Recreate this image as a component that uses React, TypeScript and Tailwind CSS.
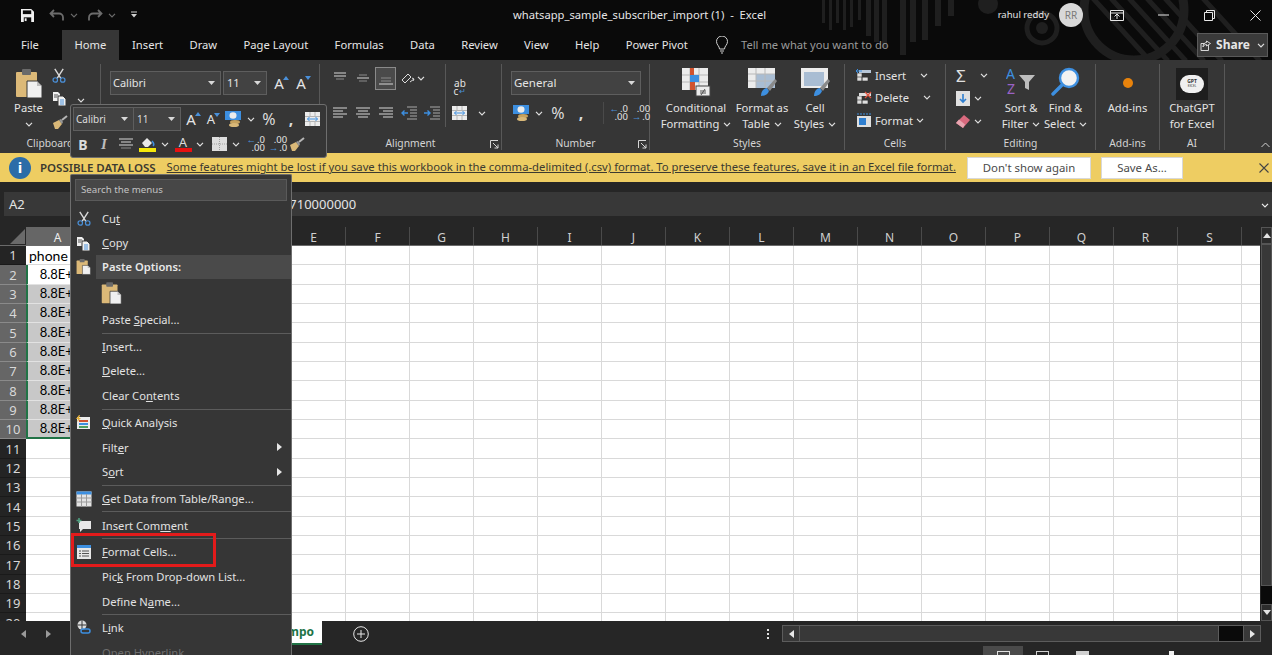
import type { ReactNode } from "react";

const Chev = ({ c = "#e0e0e0", className = "" }: { c?: string; className?: string }) => (
  <svg width="8" height="5" viewBox="0 0 8 5" className={`shrink-0 ${className}`}>
    <path d="M1 .8l3 3 3-3" stroke={c} strokeWidth="1.2" fill="none" />
  </svg>
);

const Caret = () => (
  <svg width="7" height="4" viewBox="0 0 7 4" className="shrink-0">
    <path d="M0 0h7L3.500 4z" fill="#d8d8d8" />
  </svg>
);

const Scissors = () => (
  <svg width="14" height="15" viewBox="0 0 15 16">
    <path d="M3 1l6.500 10M12 1L5.500 11" stroke="#d9d9d9" strokeWidth="1.500" fill="none" />
    <circle cx="3.500" cy="12.800" r="2.400" stroke="#4a90d9" strokeWidth="1.300" fill="none" />
    <circle cx="11.500" cy="12.800" r="2.400" stroke="#4a90d9" strokeWidth="1.300" fill="none" />
  </svg>
);

const CopyIcon = () => (
  <svg width="15" height="15" viewBox="0 0 15 15">
    <path d="M1 1h5l2 2v7H1z" fill="#f0f0f0" />
    <path d="M6 5h5l3 3v7H6z" fill="#f0f0f0" stroke="#363636" />
    <path d="M8 9h4M8 11h4M8 13h4" stroke="#4a90d9" />
    <path d="M2 4h4M2 6h3" stroke="#555" />
  </svg>
);

const Brush = () => (
  <svg width="16" height="14" viewBox="0 0 16 14">
    <path d="M1 8l6-3 3 4-4 5H3z" fill="#d9b878" />
    <path d="M7 5l2-1 2 3-1 2z" fill="#9a9a9a" />
    <path d="M10 5l5-4" stroke="#b5b5b5" strokeWidth="2" />
  </svg>
);

const PasteIcon = ({ w = 28, h = 30 }: { w?: number; h?: number }) => (
  <svg width={w} height={h} viewBox="0 0 28 30">
    <rect x="1" y="3" width="21" height="25" rx="1" fill="#dcb978" />
    <rect x="7" y="0" width="9" height="6" rx="1" fill="#6a6a6a" />
    <path d="M12 12h10l5 5v12H12z" fill="#f0f0f0" stroke="#363636" />
    <path d="M22 12v5h5" fill="#bdbdbd" />
  </svg>
);

const Lines = ({ rows, c = "#d6d6d6" }: { rows: number[][]; c?: string }) => (
  <svg width="16" height="14" viewBox="0 0 16 14">
    {rows.map((r, i) => (
      <path key={i} d={`M${r[0]} ${r[2]}H${r[1]}`} stroke={r[3] ? "#8a8a8a" : c} strokeWidth="1" />
    ))}
  </svg>
);

const GrowA = ({ up, size = 15 }: { up: boolean; size?: number }) => (
  <span className="relative flex items-end leading-none text-[#e4e4e4]" style={{ fontSize: size }}>
    A
    <svg width="6" height="4" viewBox="0 0 6 4" className="absolute -right-[5px] top-0">
      <path d={up ? "M0 4L3 0l3 4z" : "M0 0h6L3 4z"} fill="#4a90d9" />
    </svg>
  </span>
);

const Currency = () => (
  <svg width="16" height="19" viewBox="0 0 16 19">
    <rect x="0" y="1" width="16" height="9" fill="#3d8fe0" />
    <ellipse cx="8" cy="5.500" rx="3.500" ry="3.200" fill="#ececec" />
    <ellipse cx="10" cy="12" rx="5" ry="2" fill="#c6a25f" />
    <ellipse cx="9" cy="15" rx="5" ry="2" fill="#d9b878" />
  </svg>
);

const WrapIcon = ({ w = 15, h = 14 }: { w?: number; h?: number }) => (
  <svg width={w} height={h} viewBox="0 0 15 14">
    <rect width="15" height="14" fill="#ececec" />
    <path d="M0 4.500h15M0 9.500h15M5 0v4M10 0v4M5 10v4M10 10v4" stroke="#b4b4b4" />
    <path d="M2.500 7h10M4.500 5l-2 2 2 2M10.500 5l2 2-2 2" stroke="#3d8fe0" fill="none" />
  </svg>
);

const DecArrows = ({ more }: { more: boolean }) => (
  <span className="flex w-[20px] flex-col text-[9.500px] leading-[8px] text-[#e4e4e4]">
    <span className="flex items-center justify-end gap-[1px] whitespace-nowrap">
      {more ? <span>.00</span> : <><span className="text-[#4a90d9]">←</span><span>.0</span></>}
    </span>
    <span className="flex items-center justify-end gap-[1px] whitespace-nowrap">
      {more ? <><span className="text-[#4a90d9]">→</span><span>.0</span></> : <span>.00</span>}
    </span>
  </span>
);

const Launcher = () => (
  <svg width="9" height="9" viewBox="0 0 9 9" className="absolute right-[2px] bottom-[1px]">
    <path d="M.5 8V.5H8M3 3l5 5M8 4.500V8H4.500" stroke="#d6d6d6" fill="none" />
  </svg>
);

function Group({ className, label, launcher, children }: { className: string; label: string; launcher?: boolean; children: ReactNode }) {
  return (
    <div className={`relative flex h-[86px] shrink-0 flex-col border-r border-[#585858] ${className}`}>
      <div className="flex h-[72px] min-h-0">{children}</div>
      <div className="flex h-[14px] items-center justify-center pt-[1px] text-[10.300px] leading-none text-[#d4d4d4]">{label}</div>
      {launcher && <Launcher />}
    </div>
  );
}

function LargeBtn({ className, icon, l1, l2, chev = true }: { className: string; icon: ReactNode; l1: string; l2?: string; chev?: boolean }) {
  return (
    <div className={`flex flex-col items-center ${className}`}>
      <div className="flex h-[36px] items-center justify-center">{icon}</div>
      <div className="flex h-[16px] items-center whitespace-nowrap text-[11.200px] leading-none">{l1}</div>
      {l2 && (
        <div className="flex h-[16px] items-center gap-[4px] whitespace-nowrap text-[11.200px] leading-none">
          {l2}
          {chev && <Chev />}
        </div>
      )}
    </div>
  );
}

const Slot = ({ children, className = "w-[23px]" }: { children: ReactNode; className?: string }) => (
  <div className={`flex h-full shrink-0 items-center justify-center ${className}`}>{children}</div>
);

const CondIcon = () => (
  <svg width="30" height="30" viewBox="0 0 30 30">
    <rect x="1" y="1" width="26" height="22" fill="#ececec" />
    <path d="M1 8h26M1 15h26M9 1v22M18 1v22" stroke="#b8b8b8" />
    <rect x="9" y="1" width="4" height="7" fill="#d0532f" />
    <rect x="9" y="8" width="9" height="7" fill="#3d8fe0" />
    <rect x="9" y="15" width="5" height="8" fill="#d0532f" />
    <rect x="15" y="19" width="14" height="10" fill="#ececec" stroke="#444" />
    <path d="M19 24h6M19 26h6M20 28l4-6" stroke="#555" />
  </svg>
);

const TableIcon = ({ plain }: { plain?: boolean }) => (
  <svg width="30" height="30" viewBox="0 0 30 30">
    <rect x="1" y="1" width="27" height="20" fill="#ececec" />
    <rect x={plain ? 4 : 9} y={plain ? 5 : 7} width={plain ? 20 : 19} height={14} fill="#a9bdd3" />
    {!plain && <path d="M1 7h27M1 14h27M9 1v20M18 1v20" stroke="#b8b8b8" />}
    <path d="M14 29c0-5 3-8 6-8l2 3c-1 3-4 5-8 5z" fill="#3d8fe0" />
    <path d="M20 21l8-9 2 2-7 10z" fill="#8a8a8a" />
  </svg>
);

const SortIcon = () => (
  <svg width="30" height="30" viewBox="0 0 30 30">
    <text x="0" y="12" fontSize="14" fill="#3d8fe0" fontFamily="Noto Sans, sans-serif">A</text>
    <text x="1" y="27" fontSize="14" fill="#9a62c4" fontFamily="Noto Sans, sans-serif">Z</text>
    <path d="M13 8h16l-6 7v8l-4-2v-6z" fill="#bdbdbd" />
  </svg>
);

const FindIcon = () => (
  <svg width="30" height="30" viewBox="0 0 30 30">
    <circle cx="18" cy="11" r="9" fill="#f2f2f2" stroke="#3d8fe0" strokeWidth="2.400" />
    <path d="M11 18L2 27" stroke="#3d8fe0" strokeWidth="3.400" strokeLinecap="round" />
  </svg>
);

const CellsRow = ({ icon, label, chevClass }: { icon: ReactNode; label: string; chevClass: string }) => (
  <div className="flex h-[22.500px] items-center whitespace-nowrap text-[11.200px] leading-none">
    <span className="flex w-[16px] shrink-0 justify-center">{icon}</span>
    <span className="ml-[3px]">{label}</span>
    <Chev className={chevClass} />
  </div>
);

const CellGrid = ({ x }: { x?: boolean }) => (
  <svg width="16" height="14" viewBox="0 0 16 14">
    <path d="M1 5h5v8H1zM6 9h6v4H6zM1 9h11" fill="#dfdfdf" stroke="#333" strokeWidth=".6" />
    <rect x="3" y="2" width="12" height="3" fill={x ? "#dfdfdf" : "#b8c7d8"} />
    {x ? <path d="M9 1l6 6M15 1L9 7" stroke="#e0533f" strokeWidth="1.300" /> : <path d="M0 3h6M2 1L0 3l2 2" stroke="#3d8fe0" fill="none" />}
  </svg>
);

const FormatIcon = () => (
  <svg width="16" height="15" viewBox="0 0 16 15">
    <rect x="1" y="3" width="14" height="11" fill="#dfdfdf" />
    <rect x="3" y="5" width="7" height="7" fill="#2f7fd0" />
    <path d="M1 1h14" stroke="#3d8fe0" strokeDasharray="2 1" />
  </svg>
);

const CtxIcon = ({ children }: { children: ReactNode }) => (
  <span className="flex w-[25px] shrink-0 justify-center">{children}</span>
);

function MenuItem({ label, icon, u, arrow, disabled }: { label: string; icon?: ReactNode; u?: number; arrow?: boolean; disabled?: boolean }) {
  return (
    <div className={`flex h-[24.700px] shrink-0 items-center whitespace-nowrap text-[11.200px] leading-none ${disabled ? "text-[#6e6e6e]" : "text-[#e2e2e2]"}`}>
      <CtxIcon>{icon}</CtxIcon>
      <span className="ml-[6px]">
        {u === undefined ? label : <>{label.slice(0, u)}<span className="underline">{label[u]}</span>{label.slice(u + 1)}</>}
      </span>
      {arrow && (
        <svg width="5" height="8" viewBox="0 0 5 8" className="ml-auto mr-[9px]">
          <path d="M0 0l5 4-5 4z" fill="#e6e6e6" />
        </svg>
      )}
    </div>
  );
}

const MenuSep = () => (
  <div className="flex h-[2px] shrink-0 items-center pl-[31px]">
    <div className="h-px w-full bg-[#5c5c5c]" />
  </div>
);

function ContextMenu() {
  return (
    <div className="absolute left-[70px] top-[174px] z-20 flex h-[481px] w-[222px] flex-col overflow-hidden rounded-t-[2px] border border-b-0 border-[#6e6e6e] bg-[#363636]">
      <div className="mx-[4px] mt-[4px] mb-[5px] flex h-[22px] shrink-0 items-center border border-[#5a5a5a] bg-[#474747] px-[5px] text-[9.700px] text-[#c4c4c4]">
        Search the menus
      </div>
      <MenuItem label="Cut" u={2} icon={<Scissors />} />
      <MenuItem label="Copy" u={0} icon={<CopyIcon />} />
      <div className="flex h-[24px] shrink-0 items-center">
        <CtxIcon><PasteIcon w={15} h={16} /></CtxIcon>
        <div className="flex h-full flex-1 items-center bg-[#4a4a4a] pl-[6px] text-[11.200px] font-semibold text-[#e8e8e8]">Paste Options:</div>
      </div>
      <div className="flex h-[28px] shrink-0 items-center pl-[30px]"><PasteIcon w={21} h={23} /></div>
      <MenuItem label="Paste Special..." u={6} />
      <MenuSep />
      <MenuItem label="Insert..." u={0} />
      <MenuItem label="Delete..." u={0} />
      <MenuItem label="Clear Contents" u={8} />
      <MenuSep />
      <MenuItem
        label="Quick Analysis"
        u={0}
        icon={
          <svg width="15" height="15" viewBox="0 0 15 15">
            <rect x="1" y="2" width="13" height="12" fill="#ececec" />
            <path d="M3 6h9" stroke="#d0532f" strokeWidth="2" />
            <path d="M3 9h9" stroke="#3d8fe0" strokeWidth="2" />
            <path d="M3 12h9" stroke="#4e9e5f" strokeWidth="2" />
            <path d="M3 0L0 4h2L1 7l4-4H3l1-3z" fill="#e8b23a" />
          </svg>
        }
      />
      <MenuItem label="Filter" u={4} arrow />
      <MenuItem label="Sort" u={1} arrow />
      <MenuSep />
      <MenuItem
        label="Get Data from Table/Range..."
        u={0}
        icon={
          <svg width="16" height="16" viewBox="0 0 16 16">
            <rect x=".5" y=".5" width="15" height="15" fill="#e4e4e4" />
            <rect x=".5" y=".5" width="15" height="3" fill="#3d8fe0" />
            <path d="M0 7h16M0 11h16M5.500 3v13M10.500 3v13" stroke="#9a9a9a" />
          </svg>
        }
      />
      <MenuSep />
      <MenuItem
        label="Insert Comment"
        u={10}
        icon={
          <svg width="16" height="14" viewBox="0 0 16 14">
            <path d="M3 3h12v8H7l-3 3v-3H3z" fill="#e8e8e8" />
            <path d="M3 0v5M.5 2.500h5" stroke="#4e9e7f" strokeWidth="1.600" />
          </svg>
        }
      />
      <MenuSep />
      <MenuItem
        label="Format Cells..."
        u={0}
        icon={
          <svg width="14" height="14" viewBox="0 0 14 14">
            <rect width="14" height="14" fill="#e8e8e8" />
            <rect width="14" height="3" fill="#3d8fe0" />
            <path d="M2 6h2M5 6h7M2 8.500h2M5 8.500h7M2 11h2M5 11h7" stroke="#555" />
          </svg>
        }
      />
      <MenuItem label="Pick From Drop-down List..." u={3} />
      <MenuItem label="Define Name..." u={8} />
      <MenuSep />
      <MenuItem
        label="Link"
        u={1}
        icon={
          <svg width="15" height="15" viewBox="0 0 15 15">
            <circle cx="6" cy="5" r="4.500" fill="#dcdcdc" />
            <path d="M1.500 5h9M6 .5v9" stroke="#363636" />
            <path d="M5 11a2 2 0 012-2h2M10 13H7a2 2 0 01-2-2M9 9h3a2 2 0 010 4h-2" stroke="#3d8fe0" strokeWidth="1.500" fill="none" />
          </svg>
        }
      />
      <MenuItem label="Open Hyperlink" u={6} disabled />
      {/* red annotation around Format Cells */}
      <div className="absolute left-[0px] top-[358px] h-[34px] w-[145px] border-[3px] border-[#e31b1b]" />
    </div>
  );
}

function MiniToolbar() {
  return (
    <div className="absolute left-[70px] top-[104px] z-10 flex h-[54px] w-[257px] flex-col rounded-[3px] border border-[#6e6e6e] bg-[#363636] pl-[2px] text-[#dcdcdc]">
      <div className="mt-[2px] flex h-[24px] items-center">
        <div className="flex h-[24px] w-[61px] items-center justify-between border border-[#5e5e5e] bg-[#424242] pl-[2px] pr-[5px] text-[10px]">Calibri<Caret /></div>
        <div className="flex h-[24px] w-[47px] items-center justify-between border border-l-0 border-[#5e5e5e] bg-[#424242] pl-[3px] pr-[5px] text-[10px]">11<Caret /></div>
        <Slot className="w-[20px]"><GrowA up /></Slot>
        <Slot className="w-[20px]"><GrowA up={false} size={13} /></Slot>
        <Slot className="w-[24px]"><Currency /></Slot>
        <Slot className="w-[12px]"><Chev /></Slot>
        <Slot className="w-[24px]"><span className="text-[16px]">%</span></Slot>
        <Slot className="w-[20px]"><span className="text-[16px] font-bold">,</span></Slot>
        <Slot className="w-[22px]"><WrapIcon /></Slot>
      </div>
      <div className="flex h-[26px] items-center">
        <Slot className="w-[20px]"><span className="text-[14px] font-bold">B</span></Slot>
        <Slot className="w-[22px]"><span className="font-['Liberation_Serif',serif] text-[15px] font-bold italic text-[#bdbdbd]">I</span></Slot>
        <Slot className="w-[22px]"><Lines rows={[[1, 15, 2], [3, 13, 5], [1, 15, 8], [3, 13, 11, 1]]} /></Slot>
        <Slot className="w-[20px]">
          <svg width="17" height="16" viewBox="0 0 17 16">
            <path d="M3 7l5-5 5 5-4 4H6z" fill="#e8e8e8" />
            <path d="M13 5c2 2 2 4 1 5" stroke="#3d8fe0" strokeWidth="1.500" fill="none" />
            <rect y="12" width="17" height="4" fill="#f5e80a" />
          </svg>
        </Slot>
        <Slot className="w-[16px]"><Chev /></Slot>
        <Slot className="w-[20px]">
          <span className="relative flex h-[16px] w-[17px] justify-center text-[13px] leading-[13px]">A<span className="absolute bottom-0 h-[4px] w-[17px] bg-[#e81010]" /></span>
        </Slot>
        <Slot className="w-[14px]"><Chev /></Slot>
        <Slot className="w-[24px]">
          <svg width="15" height="14" viewBox="0 0 15 14">
            <rect width="15" height="14" fill="#dedede" />
            <path d="M7.500 0v14M0 7h15" stroke="#a0a0a0" strokeDasharray="1 1" />
          </svg>
        </Slot>
        <Slot className="w-[10px]"><Chev /></Slot>
        <Slot className="w-[28px]"><DecArrows more={false} /></Slot>
        <Slot className="w-[18px]"><DecArrows more /></Slot>
        <Slot className="w-[20px]"><Brush /></Slot>
      </div>
    </div>
  );
}

function TitleArea() {
  const tabs = ["Insert", "Draw", "Page Layout", "Formulas", "Data", "Review", "View", "Help", "Power Pivot"];
  return (
    <div className="relative h-[60px] shrink-0 bg-[#0a0a0a] text-[#e6e6e6]">
      <svg className="absolute inset-0" width="1272" height="60" viewBox="0 0 1272 60">
        <g fill="#1f1f1f">
          <rect x="822" y="0" width="3" height="23" /><rect x="829" y="0" width="3" height="30" />
          <rect x="836" y="0" width="3" height="23" /><rect x="843" y="0" width="3" height="30" />
          <rect x="850" y="0" width="3" height="27" /><rect x="858" y="0" width="3" height="20" />
          <rect x="866" y="0" width="5" height="36" /><rect x="874" y="0" width="5" height="42" />
          <rect x="882" y="0" width="5" height="48" /><rect x="900" y="0" width="6" height="55" />
          <rect x="910" y="0" width="6" height="42" /><rect x="922" y="0" width="6" height="40" />
          <rect x="935" y="0" width="6" height="26" /><rect x="948" y="0" width="6" height="16" />
          <circle cx="988" cy="4" r="10" />
          <circle cx="1042" cy="28" r="6" />
        </g>
        <circle cx="1042" cy="28" r="15" fill="none" stroke="#1f1f1f" strokeWidth="5" />
        <circle cx="1134" cy="10" r="50" fill="none" stroke="#1f1f1f" strokeWidth="9" />
        <path d="M1090 -5l60 66M1108 -5l60 66M1126 -5l60 66M1144 -5l60 66M1162 -5l60 66M1200 -5l60 66" stroke="#1f1f1f" strokeWidth="5" />
      </svg>
      <div className="relative flex h-[30px] items-center">
        <div className="flex w-[513px] shrink-0 items-center pl-[21px]">
          <svg width="13" height="13" viewBox="0 0 14 14">
            <path d="M0 0h11l3 3v11H0z" fill="#f0f0f0" />
            <rect x="2" y="1.500" width="9" height="4" fill="#0a0a0a" />
            <rect x="3" y="9" width="8" height="5" fill="#0a0a0a" />
            <rect x="4" y="10" width="2" height="3" fill="#f0f0f0" />
          </svg>
          <svg width="16" height="14" viewBox="0 0 16 14" className="ml-[15px]">
            <path d="M5 2L1.500 5.500 5 9M2 5.500h8a4 4 0 014 4v3" stroke="#6c6c6c" strokeWidth="1.800" fill="none" />
          </svg>
          <Chev c="#6c6c6c" className="ml-[5px]" />
          <svg width="16" height="14" viewBox="0 0 16 14" className="ml-[9px]">
            <path d="M11 2l3.500 3.500L11 9M14 5.500H6a4 4 0 00-4 4v3" stroke="#6c6c6c" strokeWidth="1.800" fill="none" />
          </svg>
          <Chev c="#6c6c6c" className="ml-[5px]" />
          <svg width="8" height="8" viewBox="0 0 8 8" className="ml-[14px]">
            <path d="M1 1h6" stroke="#d0d0d0" />
            <path d="M1 3h6L4 6.500z" fill="#d0d0d0" />
          </svg>
        </div>
        <div className="whitespace-pre text-[11.200px] leading-[16px]">whatsapp_sample_subscriber_import (1)  -  Excel</div>
        <div className="ml-auto flex items-center">
          <span className="text-[9.500px]">rahul reddy</span>
          <span className="ml-[10px] flex h-[24px] w-[24px] items-center justify-center rounded-full bg-[#d8d8d8] text-[10px] text-[#7a7a7a]">RR</span>
          <svg width="14" height="11" viewBox="0 0 14 11" className="ml-[27px]">
            <path d="M.5.5h13v10H.5zM.5 3h13" stroke="#e8e8e8" fill="none" />
            <path d="M7 9V4.500M4.500 6.500L7 4l2.500 2.500" stroke="#e8e8e8" fill="none" />
          </svg>
          <svg width="11" height="2" viewBox="0 0 11 2" className="ml-[34px]">
            <path d="M0 1h11" stroke="#e8e8e8" />
          </svg>
          <svg width="11" height="11" viewBox="0 0 11 11" className="ml-[35px]">
            <path d="M.5 2.500h8v8h-8zM2.500 2.500v-2h8v8h-2" stroke="#e8e8e8" fill="none" />
          </svg>
          <svg width="11" height="11" viewBox="0 0 11 11" className="ml-[35px] mr-[11px]">
            <path d="M.5.5l10 10M10.500.5l-10 10" stroke="#e8e8e8" />
          </svg>
        </div>
      </div>
      <div className="relative flex h-[30px] items-center text-[11.200px]">
        <span className="pl-[21px] pr-[13px] pt-[1px]">File</span>
        <span className="ml-[10px] flex h-[30px] w-[57px] items-center justify-center bg-[#363636] pt-[1px]">Home</span>
        {tabs.map((t) => (
          <span key={t} className="whitespace-nowrap px-[13.200px] pt-[1px]">{t}</span>
        ))}
        <svg width="14" height="18" viewBox="0 0 14 18" className="ml-[14px]">
          <path d="M4.500 13c0-3-3-4-3-7.500a5.500 5.500 0 0111 0c0 3.500-3 4.500-3 7.500zM5 15h4M6 17h2" stroke="#d0d0d0" fill="none" />
        </svg>
        <span className="ml-[12px] whitespace-nowrap pt-[1px] text-[#9a9a9a]">Tell me what you want to do</span>
        <div className="ml-auto mr-[4px] flex h-[24px] w-[71px] items-center justify-center gap-[4px] border border-[#5a5a5a] bg-[#3a3a3a]">
          <svg width="12" height="11" viewBox="0 0 11 11">
            <path d="M8 5v5.500H.5V3.500H4M6 1l4 2.500L6 6V4.500C4 4.500 3 5.500 2.500 7 2.500 4.500 4 2.500 6 2.500z" stroke="#d8d8d8" fill="none" />
          </svg>
          <span className="text-[12px] font-bold">Share</span>
          <Chev className="ml-[3px]" />
        </div>
      </div>
    </div>
  );
}

function Ribbon() {
  return (
    <div className="relative flex h-[93px] shrink-0 items-start bg-[#363636] pt-[4px] text-[#e4e4e4]">
      <Group className="w-[101px]" label="Clipboard">
        <div className="flex w-[52px] flex-col items-center pl-[5px] pt-[5px]">
          <PasteIcon />
          <span className="mt-[1px] text-[11.200px] leading-[16px]">Paste</span>
          <Chev className="mt-[6px]" />
        </div>
        <div className="flex flex-col">
          <div className="flex h-[23px] items-center"><Scissors /></div>
          <div className="flex h-[23px] items-center"><CopyIcon /><Chev className="ml-[10px] mt-[3px]" /></div>
          <div className="flex h-[23px] items-center"><Brush /></div>
        </div>
      </Group>
      <Group className="w-[219px]" label="Font">
        <div className="mt-[7px] flex h-[24px] items-center pl-[9px]">
          <div className="flex h-[24px] w-[111px] items-center justify-between border border-[#5e5e5e] bg-[#424242] pl-[2px] pr-[5px] text-[11px]">Calibri<Caret /></div>
          <div className="ml-[2px] flex h-[24px] w-[44px] items-center justify-between border border-[#5e5e5e] bg-[#424242] pl-[3px] pr-[5px] text-[11px]">11<Caret /></div>
          <Slot className="ml-[1px] w-[22px]"><GrowA up /></Slot>
          <Slot className="w-[22px]"><GrowA up={false} /></Slot>
        </div>
      </Group>
      <Group className="w-[182px]" label="Alignment" launcher>
        <div className="flex h-[63px] w-[126px] flex-col border-r border-[#585858] pl-[8px]">
          <div className="flex h-[28px] items-center">
            <Slot><Lines rows={[[2, 14, 2], [2, 14, 5], [4, 12, 8, 1]]} /></Slot>
            <Slot><Lines rows={[[4, 12, 4, 1], [2, 14, 7], [4, 12, 10, 1]]} /></Slot>
            <Slot>
              <div className="flex h-[23px] w-[21px] items-center justify-center border border-[#8a8a8a] bg-[#4a4a4a]">
                <Lines rows={[[3, 13, 7, 1], [3, 13, 10, 1], [1, 15, 13]]} />
              </div>
            </Slot>
            <Slot>
              <svg width="15" height="15" viewBox="0 0 15 15">
                <path d="M1 9l6-6 3 3-6 6z" fill="none" stroke="#dcdcdc" />
                <path d="M9 11l4-3M11 7l2 1-1 2" stroke="#dcdcdc" fill="none" />
              </svg>
            </Slot>
            <Chev className="-ml-[3px]" />
          </div>
          <div className="mt-[7px] flex h-[28px] items-center">
            <Slot><Lines rows={[[1, 15, 2], [1, 11, 5], [1, 15, 8], [1, 11, 11]]} /></Slot>
            <Slot><Lines rows={[[1, 15, 2], [3, 13, 5], [1, 15, 8], [3, 13, 11]]} /></Slot>
            <Slot><Lines rows={[[1, 15, 2], [5, 15, 5], [1, 15, 8], [5, 15, 11]]} /></Slot>
            <Slot>
              <svg width="16" height="14" viewBox="0 0 16 14">
                <path d="M6 1h10M9 4h7M9 7h7M9 10h7M6 13h10" stroke="#a8a8a8" />
                <path d="M7 7H1M3.500 4.500L1 7l2.500 2.500" stroke="#3d8fe0" strokeWidth="1.400" fill="none" />
              </svg>
            </Slot>
            <Slot>
              <svg width="16" height="14" viewBox="0 0 16 14">
                <path d="M6 1h10M9 4h7M9 7h7M9 10h7M6 13h10" stroke="#a8a8a8" />
                <path d="M0 7h6M3.500 4.500L6 7 3.500 9.500" stroke="#3d8fe0" strokeWidth="1.400" fill="none" />
              </svg>
            </Slot>
          </div>
        </div>
        <div className="flex flex-col pl-[6px]">
          <div className="flex h-[35px] w-[16px] flex-col items-center justify-end pb-[4px] text-[10px] leading-[8px]">
            <span>ab</span>
            <span className="flex items-center gap-[1px]">c<span className="text-[8px] text-[#4a90d9]">↵</span></span>
          </div>
          <div className="flex h-[28px] items-center"><WrapIcon /><Chev className="ml-[11px]" /></div>
        </div>
      </Group>
      <Group className="w-[148px]" label="Number" launcher>
        <div className="flex flex-col pl-[9px] pt-[7px]">
          <div className="flex h-[24px] w-[130px] items-center justify-between border border-[#5e5e5e] bg-[#424242] pl-[2px] pr-[5px] text-[11.500px]">General<Caret /></div>
          <div className="mt-[4px] flex h-[28px] items-center">
            <Slot className="w-[20px]"><Currency /></Slot>
            <Slot className="w-[15px]"><Chev /></Slot>
            <Slot className="w-[24px]"><span className="text-[16px] text-[#dcdcdc]">%</span></Slot>
            <Slot className="w-[22px]"><span className="text-[16px] font-bold text-[#dcdcdc]">,</span></Slot>
            <div className="ml-[11px] h-[22px] w-px bg-[#4a4a4a]" />
            <Slot className="w-[28px]"><DecArrows more={false} /></Slot>
            <Slot className="w-[18px]"><DecArrows more /></Slot>
          </div>
        </div>
      </Group>
      <Group className="w-[195px]" label="Styles">
        <LargeBtn className="ml-[11px] w-[70px]" icon={<CondIcon />} l1="Conditional" l2="Formatting" />
        <LargeBtn className="w-[62px]" icon={<TableIcon />} l1="Format as" l2="Table" />
        <LargeBtn className="w-[44px]" icon={<TableIcon plain />} l1="Cell" l2="Styles" />
      </Group>
      <Group className="w-[101px]" label="Cells">
        <div className="flex flex-col pl-[11px]">
          <CellsRow icon={<CellGrid />} label="Insert" chevClass="ml-[14px]" />
          <CellsRow icon={<CellGrid x />} label="Delete" chevClass="ml-[14px]" />
          <CellsRow icon={<FormatIcon />} label="Format" chevClass="ml-[3px]" />
        </div>
      </Group>
      <Group className="w-[150px]" label="Editing">
        <div className="flex w-[54px] flex-col pl-[10px]">
          <div className="flex h-[23px] items-center gap-[9px]"><span className="w-[15px] text-[17px] leading-none text-[#e0e0e0]">Σ</span><Chev /></div>
          <div className="flex h-[23px] items-center gap-[4px]">
            <svg width="14" height="15" viewBox="0 0 14 15"><rect width="14" height="15" fill="#e0e0e0" /><path d="M7 3v8M4 8l3 3 3-3" stroke="#2f7fd0" strokeWidth="1.600" fill="none" /></svg>
            <Chev />
          </div>
          <div className="flex h-[23px] items-center gap-[4px]">
            <svg width="14" height="13" viewBox="0 0 14 13"><path d="M8 0l6 5-7 8-7-5z" fill="#d9697e" /><path d="M0 8l3-3.500L9 9.500 7 13z" fill="#e8a4b0" /></svg>
            <Chev />
          </div>
        </div>
        <LargeBtn className="w-[42px]" icon={<SortIcon />} l1="Sort &" l2="Filter" />
        <LargeBtn className="w-[47px]" icon={<FindIcon />} l1="Find &" l2="Select" />
      </Group>
      <Group className="w-[64px]" label="Add-ins">
        <LargeBtn
          className="w-full"
          icon={<span className="mt-[2px] h-[10px] w-[10px] rounded-full bg-[#e8830c]" />}
          l1="Add-ins"
        />
      </Group>
      <Group className="w-[65px]" label="AI">
        <LargeBtn
          className="w-full"
          icon={
            <span className="mt-[3px] flex h-[32px] w-[32px] items-center justify-center bg-[#1e1e1e]">
              <span className="flex h-[18px] w-[24px] flex-col items-center justify-center rounded-full bg-[#f0f0f0] text-[5px] font-bold leading-[5px] text-[#333]">GPT<span className="text-[3px] font-normal leading-[4px]">EXCEL</span></span>
            </span>
          }
          l1="ChatGPT"
          l2="for Excel"
          chev={false}
        />
      </Group>
      <svg width="9" height="6" viewBox="0 0 9 6" className="absolute right-[2px] bottom-[5px]">
        <path d="M.5 5l4-4 4 4" stroke="#d0d0d0" fill="none" />
      </svg>
    </div>
  );
}

function MessageBar() {
  return (
    <div className="flex h-[29px] shrink-0 items-center overflow-hidden bg-[#eecd62] text-[#3c3a30]">
      <span className="ml-[9px] flex h-[22px] w-[22px] shrink-0 items-center justify-center rounded-full bg-[#2b6ca8] text-[15px] font-bold leading-none text-white">i</span>
      <span className="ml-[9px] whitespace-nowrap text-[11.500px] font-semibold">POSSIBLE DATA LOSS</span>
      <span className="ml-[11px] whitespace-nowrap text-[11.280px] underline">Some features might be lost if you save this workbook in the comma-delimited (.csv) format. To preserve these features, save it in an Excel file format.</span>
      <div className="ml-auto flex shrink-0 items-center">
        <span className="flex h-[22px] w-[124px] items-center justify-center border border-[#d8d8d8] bg-white text-[11.400px] text-[#4a4a4a]">Don't show again</span>
        <span className="ml-[10px] flex h-[22px] w-[82px] items-center justify-center border border-[#d8d8d8] bg-white text-[11.400px] text-[#4a4a4a]">Save As...</span>
        <svg width="10" height="10" viewBox="0 0 10 10" className="ml-[76px] mr-[3px]">
          <path d="M.5.5l9 9M9.500.5l-9 9" stroke="#444" strokeWidth="1.100" />
        </svg>
      </div>
    </div>
  );
}

function FormulaBar() {
  return (
    <div className="flex h-[45px] shrink-0 flex-col justify-start bg-[#262626] pt-[10px] pl-[4px]">
      <div className="flex h-[24px] items-center bg-[#383838] pt-[2px] text-[#e4e4e4]">
        <span className="ml-[5px] w-[258px] text-[13px]">A2</span>
        <span className="text-[13px]">918710000000</span>
        <Chev c="#f0f0f0" className="ml-auto mr-[3px]" />
      </div>
    </div>
  );
}

const COLS = ["A", "B", "C", "D", "E", "F", "G", "H", "I", "J", "K", "L", "M", "N", "O", "P", "Q", "R", "S"];
const ROWS = Array.from({ length: 20 }, (_, i) => i + 1);

function Sheet() {
  return (
    <div className="flex h-[394px] shrink-0 bg-[#262626]">
      <div className="flex w-[1260px] flex-col overflow-hidden">
        <div className="flex h-[18px] shrink-0 text-[12px] text-[#d0d0d0]">
          <div className="flex w-[26px] shrink-0 items-end justify-end p-[1px]">
            <svg width="15" height="15" viewBox="0 0 15 15"><path d="M15 0v15H0z" fill="#6a6a6a" /></svg>
          </div>
          {COLS.map((c, i) => (
            <div key={c} className={`flex w-[64px] shrink-0 items-center justify-center border-r border-[#4a4a4a] pt-[3px] ${i === 0 ? "bg-[#666666] text-[#ececec]" : ""}`}>{c}</div>
          ))}
          <div className="flex-1" />
        </div>
        <div className="h-px shrink-0 bg-[#6a6a6a]" />
        {ROWS.map((r) => {
          const sel = r >= 2 && r <= 10;
          return (
            <div key={r} className="flex h-[19.330px] shrink-0">
              <div className={`flex w-[26px] shrink-0 items-center justify-center border-b pt-[2px] text-[13px] text-[#d8d8d8] ${sel ? "border-[#8a8a8a] bg-[#666666]" : "border-[#1a1a1a] bg-[#242424]"}`}>{r}</div>
              {COLS.map((c, i) => (
                <div
                  key={c}
                  className={`flex w-[64px] shrink-0 items-center overflow-hidden border-r border-b font-['Lato',sans-serif] text-black ${
                    i === 0 && sel
                      ? `justify-end border-l-2 border-l-[#217346] text-[13px] ${r === 10 ? "border-b-2 border-b-[#217346]" : "border-b-[#e2e2e2]"} border-r-[#d8d8d8] pr-[1px] ${r === 2 ? "bg-white" : "bg-[#c8c8c8]"}`
                      : "border-[#d9d9d9] bg-white pl-[3px] text-[14px]"
                  }`}
                >
                  {i === 0 && r === 1 ? "phone" : i === 0 && sel ? "8.8E+11" : ""}
                </div>
              ))}
              <div className="flex-1 border-b border-[#d9d9d9] bg-white" />
            </div>
          );
        })}
      </div>
      <div className="ml-[1px] flex w-[11px] flex-col">
        <div className="flex h-[17px] items-center justify-center border border-[#555] bg-[#2c2c2c]">
          <svg width="8" height="5" viewBox="0 0 8 5"><path d="M0 5l4-5 4 5z" fill="#e4e4e4" /></svg>
        </div>
        <div className="h-[342px] border border-[#555] bg-[#383838]" />
        <div className="h-[18px] bg-[#0a0a0a]" />
        <div className="flex h-[17px] items-center justify-center border border-[#555] bg-[#2c2c2c]">
          <svg width="8" height="5" viewBox="0 0 8 5"><path d="M0 0l4 5 4-5z" fill="#e4e4e4" /></svg>
        </div>
      </div>
    </div>
  );
}

const Tri = ({ right, c = "#9a9a9a" }: { right?: boolean; c?: string }) => (
  <svg width="5" height="8" viewBox="0 0 5 8"><path d={right ? "M0 0l5 4-5 4z" : "M5 0L0 4l5 4z"} fill={c} /></svg>
);

function SheetTabs() {
  return (
    <div className="flex h-[25px] shrink-0 items-center bg-[#262626]">
      <div className="flex w-[322px] shrink-0 items-center justify-between self-stretch">
        <div className="flex items-center gap-[20px] pl-[21px]">
          <Tri />
          <Tri right />
        </div>
        <div className="flex h-[24px] items-center self-start border-b-2 border-[#217346] bg-white px-[8px] text-[12px] font-bold text-[#217346]">whatsapp_sample_subscriber_impo</div>
      </div>
      <svg width="16" height="16" viewBox="0 0 16 16" className="ml-[31px]">
        <circle cx="8" cy="8" r="7.300" stroke="#e8e8e8" fill="none" />
        <path d="M8 4v8M4 8h8" stroke="#e8e8e8" />
      </svg>
      <div className="ml-[398px] flex flex-col gap-[2px]">
        <span className="h-[2px] w-[2px] bg-[#e0e0e0]" />
        <span className="h-[2px] w-[2px] bg-[#e0e0e0]" />
        <span className="h-[2px] w-[2px] bg-[#e0e0e0]" />
      </div>
      <div className="ml-[13px] flex h-[17px] w-[479px] items-stretch border border-[#5c5c5c] bg-[#383838]">
        <div className="flex w-[17px] items-center justify-center border-r border-[#5c5c5c]"><Tri c="#e8e8e8" /></div>
        <div className="flex-1 border-r border-[#5c5c5c]" />
        <div className="w-[24px] bg-[#0a0a0a]" />
        <div className="flex w-[17px] items-center justify-center border-l border-[#5c5c5c]"><Tri right c="#e8e8e8" /></div>
      </div>
    </div>
  );
}

function StatusBar() {
  return (
    <div className="flex h-[9px] shrink-0 items-start overflow-hidden bg-[#262626] text-[11.200px] leading-[16px] text-[#c8c8c8]">
      <span className="ml-[505px] mt-[6px] whitespace-pre">Average: 880000000000       Count: 9       Sum: 7920000000000</span>
      <div className="ml-auto flex shrink-0 items-start">
        <div className="flex h-[9px] w-[40px] justify-center bg-[#4a4a4a] pt-[5px]">
          <span className="h-[4px] w-[13px] border border-b-0 border-[#e0e0e0]" />
        </div>
        <span className="ml-[13px] mt-[5px] h-[4px] w-[13px] border border-b-0 border-[#d0d0d0]" />
        <span className="ml-[27px] mt-[5px] h-[4px] w-[13px] bg-[#d0d0d0]" />
        <span className="ml-[80px] mr-[98px] mt-[5px] h-[4px] w-[5px] bg-[#f0f0f0]" />
      </div>
    </div>
  );
}

export default function App() {
  return (
    <div className="relative flex h-[655px] w-[1272px] flex-col overflow-hidden bg-[#262626] font-['Noto_Sans',sans-serif]">
      <TitleArea />
      <Ribbon />
      <MessageBar />
      <FormulaBar />
      <Sheet />
      <SheetTabs />
      <StatusBar />
      <MiniToolbar />
      <ContextMenu />
    </div>
  );
}
